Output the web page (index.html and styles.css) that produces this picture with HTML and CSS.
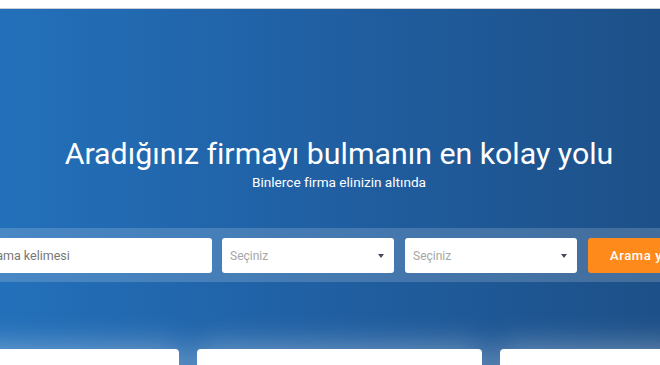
FILE: index.html
```html
<!DOCTYPE html>
<html lang="tr">
<head>
<meta charset="utf-8">
<link rel="stylesheet" href="styles.css">
</head>
<body>
<header class="topbar"></header>
<section class="hero">
  <h1 class="title">Aradığınız firmayı bulmanın en kolay yolu</h1>
  <p class="sub">Binlerce firma elinizin altında</p>
  <div class="band">
    <div class="row">
      <div class="field input"><span class="ph">Arama kelimesi</span></div>
      <div class="field select"><span class="ph light">Seçiniz</span><span class="caret"></span></div>
      <div class="field select"><span class="ph light">Seçiniz</span><span class="caret"></span></div>
      <button class="btn">Arama yap</button>
    </div>
  </div>
  <div class="cards">
    <div class="card c1"></div>
    <div class="card c2"></div>
    <div class="card c3"></div>
  </div>
</section>
</body>
</html>
```
FILE: styles.css
```css
* { box-sizing: border-box; }
html, body { margin: 0; padding: 0; }
body {
  width: 660px;
  height: 365px;
  overflow: hidden;
  font-family: Roboto, "Liberation Sans", sans-serif;
  background: #fff;
}
.topbar {
  height: 9px;
  background: #fff;
  border-bottom: 1px solid #c9ced6;
}
.hero {
  height: 356px;
  background: linear-gradient(90deg, #2370ba 0%, #205fa2 50%, #1d5088 100%);
  padding-top: 127px;
  overflow: hidden;
  position: relative;
}
.title {
  margin: 0;
  padding-left: 18px;
  text-align: center;
  color: #fff;
  font-weight: 400;
  font-size: 30.3px;
  line-height: 36px;
}
.sub {
  margin: 1px 0 0;
  padding-left: 18px;
  text-align: center;
  color: #fff;
  font-size: 13.6px;
  line-height: 18px;
}
.band {
  margin-top: 37px;
  height: 54px;
  padding-top: 10px;
  background: rgba(255, 255, 255, 0.17);
}
.row {
  display: flex;
  gap: 10px;
  margin-left: -28px;
}
.field {
  height: 35px;
  background: #fff;
  border-radius: 3px;
  display: flex;
  align-items: center;
  flex: none;
}
.input { width: 240px; padding-left: 12px; }
.select { width: 172px; padding: 0 8px; justify-content: space-between; }
.select + .select { margin-left: 1px; }
.ph { color: #777; font-size: 12.5px; }
.ph.light { color: #a6a6a6; font-size: 12px; }
.caret {
  width: 0; height: 0;
  border-left: 3.5px solid transparent;
  border-right: 3.5px solid transparent;
  border-top: 4px solid #4a4a5a;
  margin-right: 2px;
}
.btn {
  flex: none;
  width: 130px;
  height: 35px;
  margin-left: 1px;
  border: 0;
  border-radius: 3px;
  background: #ff8a1c;
  color: #fff;
  font-family: inherit;
  font-size: 13px;
  font-weight: 500;
  letter-spacing: 0.6px;
  text-align: left;
  padding-left: 22px;
}
.cards {
  margin-top: 67px;
  display: flex;
  gap: 18px;
  margin-left: -120px;
}
.card {
  height: 60px;
  flex: none;
  background: #fff;
  border-radius: 4px;
  box-shadow: 0 0 30px 4px rgba(255, 255, 255, 0.35);
}
.c1 { width: 299px; }
.c2 { width: 285px; }
.c3 { width: 284px; }
```
